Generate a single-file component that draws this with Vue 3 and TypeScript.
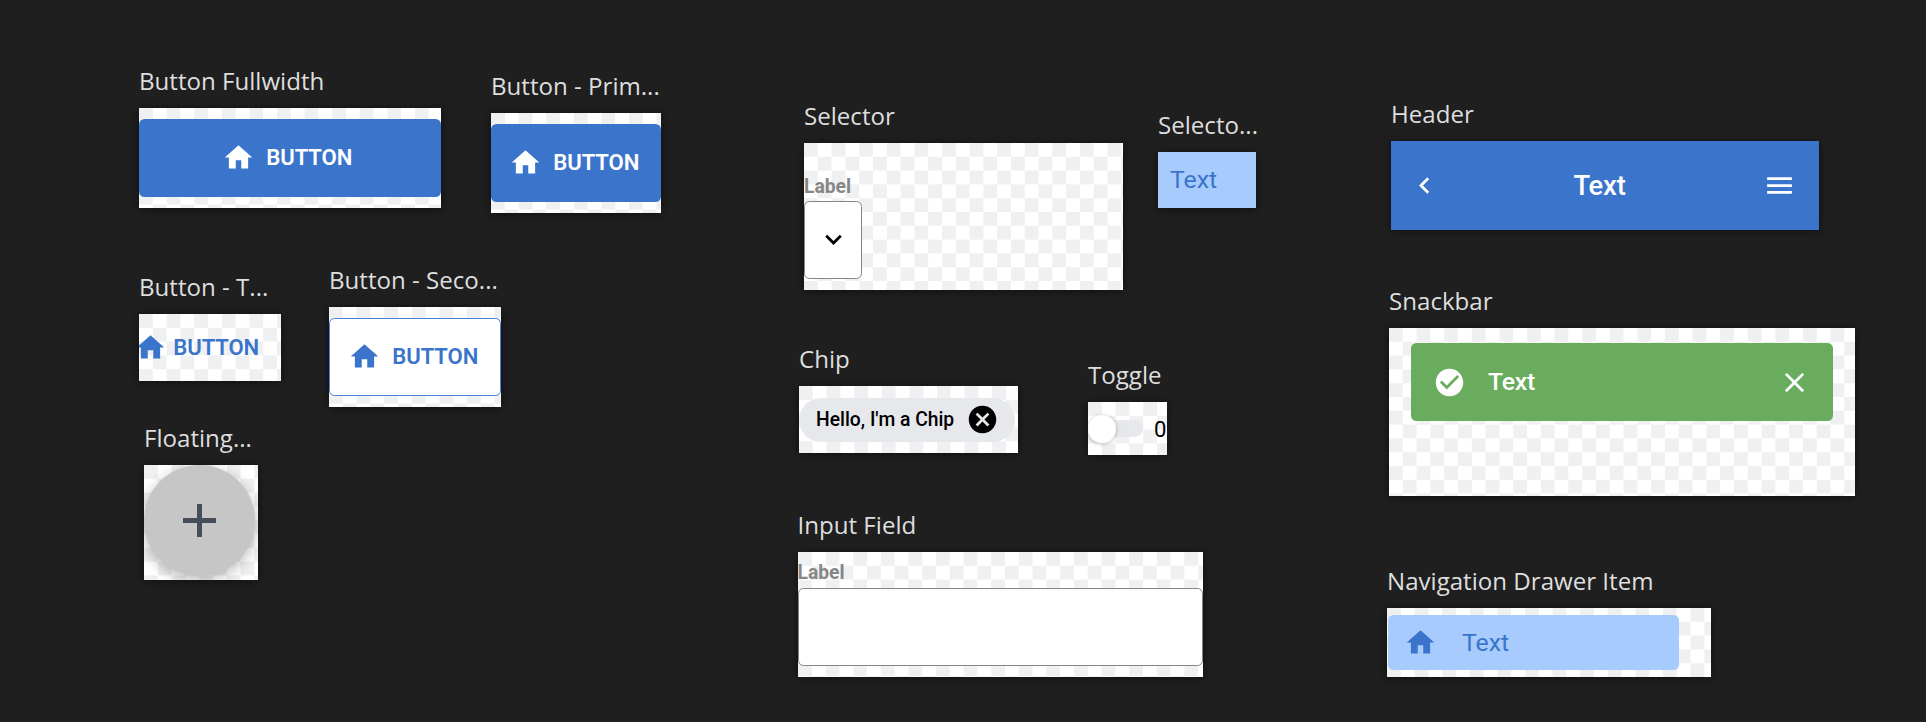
<script setup lang="ts">
type Kind =
  | 'full' | 'primary' | 'tertiary' | 'secondary' | 'fab' | 'selector' | 'option'
  | 'chip' | 'toggle' | 'input' | 'header' | 'snackbar' | 'drawer'

interface Artboard {
  kind: Kind
  title: string
  x: number
  y: number
  w: number
  h: number
}

const TITLE_SPACE = 45

// Free-canvas placement of every component artboard
const boards: Artboard[] = [
  { kind: 'full', title: 'Button Fullwidth', x: 139, y: 108, w: 302, h: 100 },
  { kind: 'primary', title: 'Button - Prim...', x: 491, y: 113, w: 170, h: 100 },
  { kind: 'tertiary', title: 'Button - T...', x: 139, y: 314, w: 142, h: 67 },
  { kind: 'secondary', title: 'Button - Seco...', x: 329, y: 307, w: 172, h: 100 },
  { kind: 'fab', title: 'Floating...', x: 144, y: 465, w: 114, h: 115 },
  { kind: 'selector', title: 'Selector', x: 804, y: 143, w: 319, h: 147 },
  { kind: 'option', title: 'Selecto...', x: 1158, y: 152, w: 98, h: 56 },
  { kind: 'chip', title: 'Chip', x: 799, y: 386, w: 219, h: 67 },
  { kind: 'toggle', title: 'Toggle', x: 1088, y: 402, w: 79, h: 53 },
  { kind: 'input', title: 'Input Field', x: 797.5, y: 552, w: 405.5, h: 124.5 },
  { kind: 'header', title: 'Header', x: 1391, y: 141, w: 428, h: 89 },
  { kind: 'snackbar', title: 'Snackbar', x: 1389, y: 328, w: 466, h: 168 },
  { kind: 'drawer', title: 'Navigation Drawer Item', x: 1387, y: 608, w: 324, h: 69 },
]

const HOME = 'M10 20v-6h4v6h5v-8h3L12 3 2 12h3v8z'

const place = (b: Artboard) => ({ left: `${b.x}px`, top: `${b.y - TITLE_SPACE}px` })
const size = (b: Artboard) => ({ width: `${b.w}px`, height: `${b.h}px` })
</script>

<template>
  <main class="canvas">
    <section v-for="b in boards" :key="b.title" class="node" :style="place(b)">
      <h2 class="title">{{ b.title }}</h2>
      <div class="board" :class="b.kind" :style="size(b)">
        <button v-if="b.kind === 'full' || b.kind === 'primary' || b.kind === 'secondary' || b.kind === 'tertiary'" class="btn">
          <svg class="icon" viewBox="0 0 24 24"><path :d="HOME" /></svg>
          <span>BUTTON</span>
        </button>

        <div v-else-if="b.kind === 'fab'" class="round">
          <svg viewBox="0 0 33 33"><path d="M14 0h5v14h14v5H19v14h-5V19H0v-5h14z" /></svg>
        </div>

        <template v-else-if="b.kind === 'selector'">
          <label class="label">Label</label>
          <div class="box">
            <svg class="icon" viewBox="0 0 24 24"><path d="M16.59 8.59 12 13.17 7.41 8.59 6 10l6 6 6-6z" /></svg>
          </div>
        </template>

        <span v-else-if="b.kind === 'option'" class="text">Text</span>

        <div v-else-if="b.kind === 'chip'" class="pill">
          <span>Hello, I'm a Chip</span>
          <svg class="icon" viewBox="0 0 24 24"><path d="M12 2C6.47 2 2 6.47 2 12s4.47 10 10 10 10-4.47 10-10S17.53 2 12 2zm5 13.59L15.59 17 12 13.41 8.41 17 7 15.59 10.59 12 7 8.41 8.41 7 12 10.59 15.59 7 17 8.41 13.41 12z" /></svg>
        </div>

        <template v-else-if="b.kind === 'toggle'">
          <div class="knob"></div>
          <div class="track"></div>
          <span class="count">0</span>
        </template>

        <template v-else-if="b.kind === 'input'">
          <label class="label">Label</label>
          <div class="box"></div>
        </template>

        <template v-else-if="b.kind === 'header'">
          <svg class="icon" viewBox="0 0 24 24"><path d="M15.41 7.41 14 6l-6 6 6 6 1.41-1.41L10.83 12z" /></svg>
          <span class="heading">Text</span>
          <svg class="icon" viewBox="0 0 24 24"><path d="M3 18h18v-2H3v2zm0-5h18v-2H3v2zm0-7v2h18V6H3z" /></svg>
        </template>

        <div v-else-if="b.kind === 'snackbar'" class="snack">
          <svg class="icon" viewBox="0 0 24 24"><path d="M12 2C6.48 2 2 6.48 2 12s4.48 10 10 10 10-4.48 10-10S17.52 2 12 2zm-2 15-5-5 1.41-1.41L10 14.17l7.59-7.59L19 8l-9 9z" /></svg>
          <span class="text">Text</span>
          <svg class="icon" viewBox="0 0 24 24"><path d="M19 6.41 17.59 5 12 10.59 6.41 5 5 6.41 10.59 12 5 17.59 6.41 19 12 13.41 17.59 19 19 17.59 13.41 12z" /></svg>
        </div>

        <div v-else class="item">
          <svg class="icon" viewBox="0 0 24 24"><path :d="HOME" /></svg>
          <span class="text">Text</span>
        </div>
      </div>
    </section>
  </main>
</template>

<style>
body {
  margin: 0;
  background: #1f1f1f;
}
</style>

<style scoped>
.canvas {
  position: relative;
  width: 100%;
  height: 722px;
  overflow: hidden;
  background: #1f1f1f;
  font-family: Roboto, 'Liberation Sans', sans-serif;
}
.canvas * {
  box-sizing: border-box;
}
.node {
  position: absolute;
}
.title {
  margin: 0 0 9px;
  height: 36px;
  font: 400 24.1px/36px 'Open Sans', 'Noto Sans', sans-serif;
  color: #dedede;
  white-space: nowrap;
}
.board {
  display: flex;
  overflow: hidden;
  background: conic-gradient(#fff 25%, #eff0f2 0 50%, #fff 0 75%, #eff0f2 0) 0 0 / 27.6px 27.6px;
  box-shadow: 0 1px 9px rgba(0, 0, 0, 0.55);
}
.icon {
  flex: none;
  width: 33px;
  height: 33px;
  fill: currentColor;
}

/* Buttons */
.btn {
  display: flex;
  align-items: center;
  justify-content: center;
  gap: 11.5px;
  width: 100%;
  height: 78px;
  margin: 11px 0 0;
  padding: 0 4px 1px 0;
  border: 0;
  border-radius: 5.5px;
  background: #3a75cb;
  color: #fff;
  font: 600 22.1px/33px Roboto, sans-serif;
  letter-spacing: -0.1px;
}
.full .btn {
  padding-right: 6px;
}
.primary .btn {
  margin-top: 10.6px;
}
.secondary .btn {
  background: #fff;
  color: #3a75cb;
  border: 1.4px solid #4a82d3;
}
.tertiary .btn {
  justify-content: flex-start;
  gap: 6.5px;
  height: 67px;
  margin: 0 0 0 -5.2px;
  padding: 0;
  background: none;
  color: #3a75cb;
}

/* Floating action button */
.round {
  display: flex;
  align-items: center;
  justify-content: center;
  width: 111px;
  height: 111px;
  border-radius: 50%;
  background: #c6c6c6;
  box-shadow: 0 4px 14px rgba(0, 0, 0, 0.28);
}
.round svg {
  width: 33px;
  height: 33px;
  fill: #454d58;
}

/* Selector and input */
.selector,
.input {
  flex-direction: column;
}
.label {
  color: #868686;
  font-size: 19.3px;
  font-weight: 700;
  line-height: 24px;
}
.selector .label {
  margin-top: 32px;
}
.input .label {
  margin-top: 9px;
}
.box {
  display: flex;
  align-items: center;
  justify-content: center;
  flex: none;
  height: 78px;
  background: #fff;
  border: 1.4px solid #868686;
  border-radius: 5.5px;
}
.selector .box {
  width: 58px;
  margin-top: 2px;
  padding-bottom: 1px;
  color: #000;
}
.input .box {
  margin: 3px 0 0;
}

.text {
  font-size: 24.8px;
  line-height: 36px;
}
.option {
  align-items: center;
  padding-left: 12px;
  background: #a6cbfc;
  color: #3a75cb;
}

/* Chip */
.chip {
  align-items: center;
}
.pill {
  display: flex;
  align-items: center;
  justify-content: space-between;
  width: 216px;
  height: 44px;
  padding: 0 16px 0 17px;
  border-radius: 22px;
  background: #e6e8ec;
  color: #000;
  font-size: 19.3px;
  font-weight: 500;
  white-space: nowrap;
}

/* Toggle */
.toggle {
  align-items: center;
}
.knob {
  position: relative;
  z-index: 1;
  flex: none;
  width: 28px;
  height: 28px;
  border-radius: 50%;
  background: #fff;
  box-shadow: 0 1px 4px rgba(0, 0, 0, 0.25);
}
.track {
  flex: none;
  width: 42px;
  height: 17px;
  margin-left: -15px;
  border-radius: 8.5px;
  background: #e6e8ec;
}
.count {
  margin-left: 11px;
  font-size: 22.1px;
  color: #000;
}

/* Header */
.header {
  align-items: center;
  justify-content: space-between;
  padding: 0 23px 0 17px;
  background: #3a75cb;
  color: #fff;
}
.heading {
  margin-right: 5px;
  font-size: 27.4px;
  font-weight: 500;
  letter-spacing: -0.2px;
}

/* Snackbar */
.snack {
  display: flex;
  align-items: center;
  width: 422px;
  height: 78px;
  margin: 15px 0 0 22px;
  padding: 0 22px;
  border-radius: 5.5px;
  background: #69ac5d;
  color: #fff;
}
.snack .text {
  flex: 1;
  margin-left: 22px;
  font-weight: 500;
  letter-spacing: -0.2px;
}

/* Navigation drawer */
.item {
  display: flex;
  align-items: center;
  width: 291px;
  height: 55px;
  margin: 7px 0 0 1px;
  padding-left: 16px;
  border-radius: 5.5px;
  background: #a6cbfc;
  color: #3a75cb;
}
.item .text {
  margin-left: 25px;
}
</style>
